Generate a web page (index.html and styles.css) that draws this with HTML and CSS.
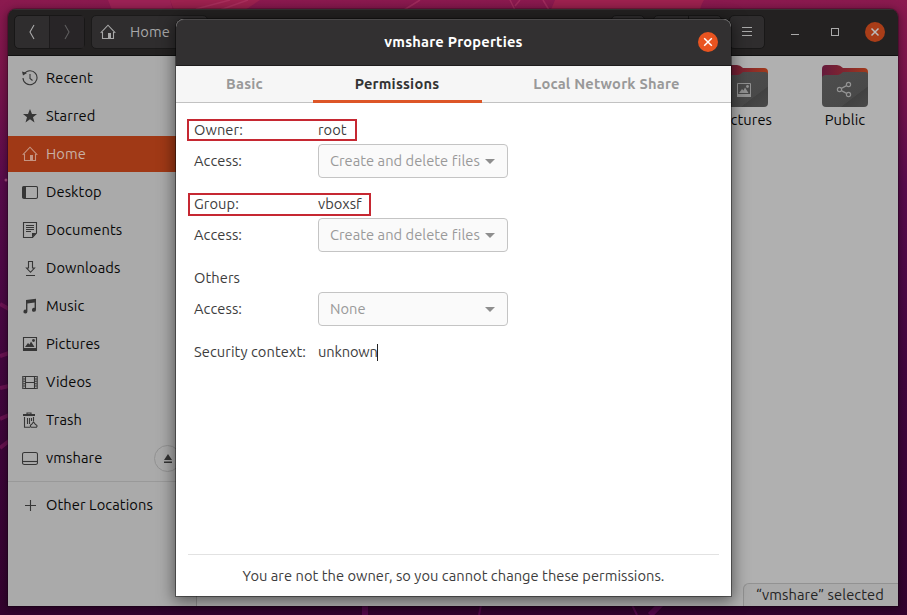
FILE: index.html
```
<!DOCTYPE html>
<html lang="en">
<head>
<meta charset="utf-8">
<title>vmshare Properties</title>
<link rel="stylesheet" href="styles.css">
</head>
<body>
<svg class="wallpaper" viewBox="0 0 907 615" aria-hidden="true">
  <path d="M108 0H170L173 10H112Z" fill="#a8285a" opacity=".6"/>
  <path d="M170 0H260L245 10H174ZM555 0H704Q700 6 700 12H550Z" fill="#a3254f" opacity=".75"/>
  <g fill="none" stroke="#b33a68" stroke-width="1.5" opacity=".55">
    <path d="M196 9L230 0M220 10L248 0M404 10L420 0M510 0L515 10M520 0L515 6M543 0L549 10"/>
  </g>
  <g fill="none" stroke="#8a1d62" stroke-width="4" opacity=".55">
    <path d="M0 304L9 309M0 356L9 353M0 388L9 386M0 419L9 415M0 448L9 441"/>
  </g>
  <g fill="none" stroke="#6d0c61" opacity=".6">
    <path d="M365 604V615" stroke-width="6"/>
    <path d="M481 605L479 615M632 605L637 615" stroke-width="2"/>
    <path d="M661 604L650 615" stroke-width="6"/>
  </g>
  <circle cx="6" cy="180" r="1.5" fill="#a64a80"/>
</svg>
<div class="window">
  <header class="titlebar">
    <div class="nav">
      <span class="nav-btn"><svg width="10" height="18" viewBox="0 0 10 18"><path d="M7 2L3 9L7 16"/></svg></span>
      <span class="nav-btn off"><svg width="10" height="18" viewBox="0 0 10 18"><path d="M3 2L7 9L3 16"/></svg></span>
    </div>
    <div class="path"><svg class="ic" viewBox="0 0 16 16"><use href="#home"/></svg><span>Home</span></div>
    <span class="tool search"></span>
    <span class="tool view"></span>
    <span class="tool menu"><svg width="12" height="12" viewBox="0 0 12 12"><path d="M1 1.5H11M1 5.5H11M1 9.5H11"/></svg></span>
    <span class="minimize"></span>
    <span class="maximize"></span>
    <span class="close dim"><svg width="10" height="10" viewBox="0 0 10 10"><path d="M1.5 1.5L8.5 8.5M8.5 1.5L1.5 8.5"/></svg></span>
  </header>
  <div class="main">
    <nav class="sidebar">
      <a class="place"><svg class="ic" viewBox="0 0 16 16"><path d="M2.2 3.8A7 7 0 1 1 1 8M8 4V8.5L10.5 10.5"/><path class="fill" d="M0 1.5L5 3L1 5.5Z"/></svg><span>Recent</span></a>
      <a class="place"><svg class="ic" viewBox="0 0 16 16"><path class="fill" d="M8 1L10 6H15L11 9.3L12.5 14.5L8 11.3L3.5 14.5L5 9.3L1 6H6Z"/></svg><span>Starred</span></a>
      <a class="place active"><svg class="ic" viewBox="0 0 16 16"><g id="home"><path d="M.7 8.8L8 1.2L15.3 8.8M2.5 8V14.5H13.5V8"/><path class="fill" d="M8 9H11V14H8Z"/></g></svg><span>Home</span></a>
      <a class="place"><svg class="ic" viewBox="0 0 16 16"><rect x=".5" y="2.5" width="15" height="12" rx="1.5"/><path class="fill" d="M1 3H4V14H1Z"/></svg><span>Desktop</span></a>
      <a class="place"><svg class="ic" viewBox="0 0 16 16"><path d="M1.5 .5H14.5V11L10.5 15.5H1.5ZM4 3.5H12M4 5.5H12M4 7.5H12M4 9.5H9"/><path class="fill" d="M10 11H14.5L10 15.5Z"/></svg><span>Documents</span></a>
      <a class="place"><svg class="ic" viewBox="0 0 16 16"><path d="M6.5 1.5H10.5V8H12.5L8.5 12.3L4.5 8H6.5ZM4 15.5H13"/></svg><span>Downloads</span></a>
      <a class="place"><svg class="ic" viewBox="0 0 16 16"><path class="fill" d="M4 2L14 .8V11.5A2 2 0 1 1 12.6 9.8V4.5L5.4 5.4V13.5A2 2 0 1 1 4 11.7Z"/></svg><span>Music</span></a>
      <a class="place"><svg class="ic" viewBox="0 0 16 16"><g id="picture"><path d="M1.5 1.5H14.5V14H1.5Z"/><path class="fill" d="M1 12H15V15H1ZM3 11L6 7L7.5 8.5L9 5.5L12.5 11Z"/><circle class="fill" cx="11.5" cy="4.5" r="1.4"/></g></svg><span>Pictures</span></a>
      <a class="place"><svg class="ic" viewBox="0 0 16 16"><path d="M3.5 2V15M12.5 2V15M3.5 2.5H12.5M3.5 8.5H12.5M3.5 14.5H12.5M.8 2V15M15.2 2V15"/><path d="M2.2 2V15M13.8 2V15" stroke-width="2" stroke-dasharray="1 1.4"/></svg><span>Videos</span></a>
      <a class="place"><svg class="ic" viewBox="0 0 16 16"><path d="M5 2.5V1H9V2.5M2.5 5V15.2H8M11.5 5V9M5.5 6V12M7.5 6V12M9.5 6V9"/><path class="fill" d="M1 2H13V4H1Z"/><path d="M9 15.2Q7.5 13.2 9.5 12.5L11.5 10L13.5 12.5Q16 13.5 14.5 15.2Z"/></svg><span>Trash</span></a>
      <a class="place drive"><svg class="ic" viewBox="0 0 16 16"><rect x=".5" y="2.5" width="15" height="12" rx="1.8"/><path d="M1 11.5H15"/></svg><span>vmshare</span><i class="eject"><svg width="8" height="10" viewBox="0 0 8 10"><path d="M4 0L8 6H0ZM0 7.5H8V9H0Z"/></svg></i></a>
      <a class="place other"><svg class="ic" viewBox="0 0 16 16"><path d="M3 8.5H14M8.5 3V14"/></svg><span>Other Locations</span></a>
    </nav>
    <section class="files">
      <div class="file"><svg class="folder" viewBox="0 0 46 42"><use href="#folder"/><svg x="14" y="17" width="16" height="16" viewBox="0 0 16 16" class="emblem"><use href="#picture"/></svg></svg><span>Pictures</span></div>
      <div class="file"><svg class="folder" viewBox="0 0 46 42"><defs><linearGradient id="back"><stop offset="0" stop-color="#651b3c"/><stop offset=".5" stop-color="#82252f"/><stop offset="1" stop-color="#a13b1a"/></linearGradient><linearGradient id="front" x2="1" y2="1"><stop stop-color="#4d4d4d"/><stop offset=".7" stop-color="#494949"/><stop offset=".71" stop-color="#414141"/><stop offset="1" stop-color="#494949"/></linearGradient></defs><g id="folder"><path d="M4 0H15Q18 0 21 3H42Q46 3 46 7V20H0V4Q0 0 4 0Z" fill="url(#back)"/><path d="M4 10H16Q18 10 21 7H43Q46 7 46 10V38Q46 42 42 42H4Q0 42 0 38V13Q0 10 4 10Z" fill="url(#front)"/></g><g fill="none" stroke="#929292" stroke-width="1.2"><circle cx="17.5" cy="24.5" r="2.1"/><circle cx="26.5" cy="19.5" r="2.1"/><circle cx="26.5" cy="29.5" r="2.1"/><path d="M19.4 23.4L24.6 20.6M19.4 25.6L24.6 28.4"/></g></svg><span>Public</span></div>
      <div class="status"><span>“vmshare” selected</span></div>
    </section>
  </div>
</div>

<div class="dialog">
  <header class="dialog-bar"><h1>vmshare Properties</h1><span class="close"><svg width="10" height="10" viewBox="0 0 10 10"><path d="M1.2 1.2L8.8 8.8M8.8 1.2L1.2 8.8"/></svg></span></header>
  <div class="tabs">
    <span class="tab">Basic</span>
    <span class="tab on">Permissions</span>
    <span class="tab">Local Network Share</span>
  </div>
  <div class="form">
    <div class="row marked owner"><label>Owner:</label><span>root</span></div>
    <div class="row field"><label>Access:</label><div class="combo"><span>Create and delete files</span><i class="arrow"></i></div></div>
    <div class="row marked group"><label>Group:</label><span>vboxsf</span></div>
    <div class="row field"><label>Access:</label><div class="combo"><span>Create and delete files</span><i class="arrow"></i></div></div>
    <div class="row others"><label>Others</label></div>
    <div class="row field"><label>Access:</label><div class="combo"><span>None</span><i class="arrow"></i></div></div>
    <div class="row context"><label>Security context:</label><span class="value">unknown</span><i class="caret"></i></div>
  </div>
  <footer>You are not the owner, so you cannot change these permissions.</footer>
</div>
</body>
</html>
```
FILE: styles.css
```
* { box-sizing: border-box; }
body {
  margin: 0;
  width: 907px;
  height: 615px;
  overflow: hidden;
  position: relative;
  padding: 9px 9px 9px 8px;
  font: 14.667px/20px Ubuntu, "Noto Sans", sans-serif;
  letter-spacing: .04px;
  color: #3d3d3d;
  background: linear-gradient(180deg, #8b1a4f 0, #7d154c 12%, #5a0b4d 30%, #43063f 60%, #34032f 100%);
}
span, label { white-space: nowrap; }
svg { flex: none; }
.wallpaper { position: absolute; inset: 0; width: 907px; height: 615px; }
.window {
  position: relative;
  height: 597px;
  display: flex;
  flex-direction: column;
  border-radius: 8px 8px 0 0;
  overflow: hidden;
  box-shadow: 0 0 0 1px rgba(0,0,0,.2), 0 2px 8px 2px rgba(0,0,0,.35);
}
.titlebar {
  height: 47px;
  display: flex;
  align-items: center;
  padding: 0 13px 1px 6px;
  background: #232121;
  border-top: 1px solid #343233;
  border-bottom: 1px solid #111;
  color: #a8a8a8;
}
.nav { display: flex; height: 34px; width: 71px; border: 1px solid #181717; border-radius: 5px; background: #2f2d2e; }
.nav-btn { flex: 1; display: flex; align-items: center; justify-content: center; }
.nav-btn.off { background: #272526; border-left: 1px solid #191818; opacity: .85; }
.nav svg { fill: none; stroke: #aaa; stroke-width: 1.1; }
.nav .off svg { stroke: #666; }
.path { display: flex; align-items: center; gap: 14px; margin-left: 6px; padding-left: 8px; width: 117px; height: 34px; border: 1px solid #1b1a1a; border-radius: 5px; background: #2f2d2e; }
.path .ic { color: #a8a8a8; }
.path, .sidebar, .files { letter-spacing: .1px; }
.tool { height: 34px; border: 1px solid #191818; border-radius: 5px; background: #2f2d2e; }
.search { width: 34px; margin-left: 403px; }
.view { width: 69px; margin-left: 8px; background: linear-gradient(90deg, #2f2d2e 34px, #191818 34px, #191818 35px, #2f2d2e 35px); }
.menu { width: 36px; margin-left: 7px; display: flex; align-items: center; justify-content: center; }
.menu svg { fill: none; stroke: #aaa; stroke-width: 1; }
.minimize { width: 8px; height: 1px; background: #aaa; margin: 4px 0 0 26px; }
.maximize { width: 8px; height: 8px; border: 1px solid #aaa; margin-left: 32px; }
.close { width: 20px; height: 20px; border-radius: 50%; background: #e95420; display: flex; align-items: center; justify-content: center; }
.close svg { fill: none; stroke: #fff; stroke-width: 1.5; }
.dim { margin-left: auto; background: #a93d18; }
.dim svg { stroke: #bbb; }
.main { flex: 1; display: flex; color: #080808; }
.sidebar { width: 189px; background: #aaa; border-right: 1px solid #8f8f8f; padding-top: 4px; }
.place { height: 38px; padding: 0 0 2px 14px; display: flex; align-items: center; gap: 8px; }
.ic { width: 16px; height: 16px; fill: none; stroke: currentColor; stroke-width: 1.1; color: #363636; }
.fill { fill: currentColor; stroke: none; }
.active { height: 36px; padding-bottom: 0; margin-bottom: 2px; background: #a03916; color: #c8b0a4; }
.active .ic { color: #c59583; }
.drive { height: 42px; padding-bottom: 6px; border-bottom: 1px solid #999; position: relative; }
.eject { position: absolute; left: 146px; top: 5px; width: 27px; height: 27px; border: 1px solid #929292; border-radius: 50%; display: flex; align-items: center; justify-content: center; }
.eject svg { fill: #333; }
.other { height: 46px; padding-bottom: 0; }
.files { flex: 1; position: relative; background: #b0b0b0; display: flex; justify-content: flex-end; gap: 22px; padding: 9px 14px 0 0; }
.file { width: 78px; display: flex; flex-direction: column; align-items: center; gap: 3px; }
.folder { width: 46px; height: 42px; }
.emblem { fill: none; stroke: #929292; color: #929292; }
.status { position: absolute; right: 0; bottom: 0; height: 23px; width: 155px; padding-left: 12px; line-height: 22px; background: #aaa; border: solid #929292; border-width: 1px 0 0 1px; border-radius: 6px 0 0 0; color: #242424; }
.dialog {
  position: absolute;
  left: 176px;
  top: 19px;
  width: 555px;
  height: 577px;
  background: #fff;
  border-radius: 8px 8px 0 0;
  display: flex;
  flex-direction: column;
  box-shadow: 0 0 0 1px rgba(0,0,0,.4), 0 3px 16px 2px rgba(0,0,0,.5);
}
.dialog-bar { height: 47px; display: flex; align-items: center; padding: 0 13px 1px 33px; background: #323031; border-top: 1px solid #4a4849; border-bottom: 1px solid #1e1c1d; border-radius: 8px 8px 0 0; }
h1 { margin: 0; flex: 1; text-align: center; font: bold 14.667px/20px Ubuntu, "Noto Sans", sans-serif; letter-spacing: .2px; color: #fff; }
.tabs { height: 37px; display: flex; background: #f6f6f6; border-bottom: 1px solid #c2c2c2; font-weight: bold; letter-spacing: .2px; color: #999; }
.tab { width: 137px; height: 37px; padding-bottom: 1px; display: flex; align-items: center; justify-content: center; }
.tab.on { width: 169px; border-bottom: 3px solid #dd5627; color: #333; padding: 2px 1px 0 0; }
.tab:last-child { width: 249px; }
.form { flex: 1; display: flex; flex-direction: column; align-items: flex-start; padding: 16px 0 0 11px; }
.row { display: flex; align-items: center; padding-left: 7px; }
.row label { width: 124px; flex: none; letter-spacing: .08px; }
.marked { border: 2px solid #c62832; padding-left: 5px; }
.owner { width: 170px; height: 22px; }
.group { width: 183px; height: 23px; margin: 15px 0 2px 1px; padding: 0 0 1px 4px; }
.field { height: 34px; }
.owner + .field { margin-top: 3px; }
.combo { width: 190px; height: 34px; display: flex; align-items: center; justify-content: space-between; padding: 0 12px 0 11px; border: 1px solid #c4c4c4; border-radius: 4px; background: #fafafa; color: #999; }
.arrow { border: 5px solid transparent; border-top-color: #8e8e8e; border-bottom: 0; }
.others { height: 20px; margin: 16px 0 4px; }
.context { height: 20px; margin-top: 16px; }
.value { width: 59px; letter-spacing: -.15px; }
.caret { width: 1px; height: 17px; background: #222; }
footer { margin: 0 12px; height: 42px; border-top: 1px solid #e2e2e2; text-align: center; line-height: 42px; white-space: nowrap; }
```
